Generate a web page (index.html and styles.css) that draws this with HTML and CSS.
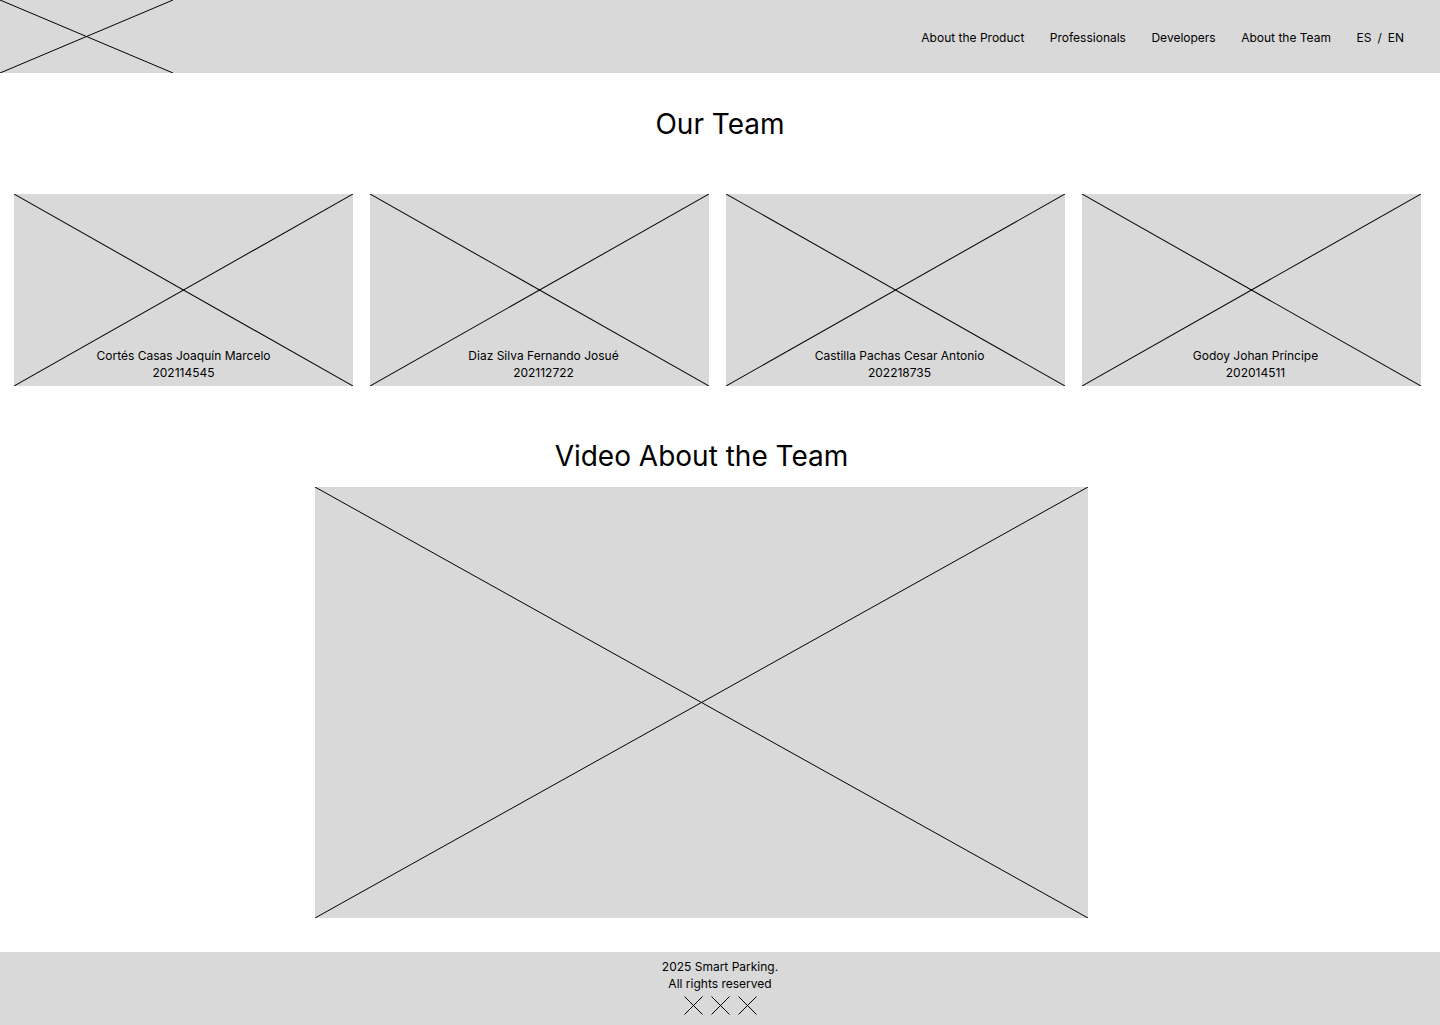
FILE: index.html
```html
<!DOCTYPE html>
<html lang="en">
<head>
<meta charset="utf-8">
<title>Smart Parking - About the Team</title>
<link rel="stylesheet" href="styles.css">
</head>
<body>
<header class="header">
  <a class="logo" href="#">
    <svg class="ph" viewBox="0 0 100 100" preserveAspectRatio="none"><line x1="0" y1="0" x2="100" y2="100"/><line x1="100" y1="0" x2="0" y2="100"/></svg>
  </a>
  <nav class="nav">
    <a href="#">About the Product</a>
    <a href="#">Professionals</a>
    <a href="#">Developers</a>
    <a href="#">About the Team</a>
    <span class="lang"><a href="#">ES</a><span>/</span><a href="#">EN</a></span>
  </nav>
</header>

<main>
  <h1 class="title">Our Team</h1>
  <section class="cards">
    <div class="card">
      <svg class="ph" viewBox="0 0 100 100" preserveAspectRatio="none"><line x1="0" y1="0" x2="100" y2="100"/><line x1="100" y1="0" x2="0" y2="100"/></svg>
      <div class="card-text"><span>Cortés Casas Joaquín Marcelo</span><span>202114545</span></div>
    </div>
    <div class="card card--shift">
      <svg class="ph" viewBox="0 0 100 100" preserveAspectRatio="none"><line x1="0" y1="0" x2="100" y2="100"/><line x1="100" y1="0" x2="0" y2="100"/></svg>
      <div class="card-text"><span>Diaz Silva Fernando Josué</span><span>202112722</span></div>
    </div>
    <div class="card card--shift">
      <svg class="ph" viewBox="0 0 100 100" preserveAspectRatio="none"><line x1="0" y1="0" x2="100" y2="100"/><line x1="100" y1="0" x2="0" y2="100"/></svg>
      <div class="card-text"><span>Castilla Pachas Cesar Antonio</span><span>202218735</span></div>
    </div>
    <div class="card card--shift">
      <svg class="ph" viewBox="0 0 100 100" preserveAspectRatio="none"><line x1="0" y1="0" x2="100" y2="100"/><line x1="100" y1="0" x2="0" y2="100"/></svg>
      <div class="card-text"><span>Godoy Johan Príncipe</span><span>202014511</span></div>
    </div>
  </section>

  <section class="video-section">
    <h2 class="title">Video About the Team</h2>
    <div class="video">
      <svg class="ph" viewBox="0 0 100 100" preserveAspectRatio="none"><line x1="0" y1="0" x2="100" y2="100"/><line x1="100" y1="0" x2="0" y2="100"/></svg>
    </div>
  </section>
</main>

<footer class="footer">
  <p class="copy">2025 Smart Parking.<br>All rights reserved</p>
  <div class="socials">
    <a href="#" class="social"><svg viewBox="0 0 19 19"><line x1="0.5" y1="0.5" x2="18.5" y2="18.5"/><line x1="18.5" y1="0.5" x2="0.5" y2="18.5"/></svg></a>
    <a href="#" class="social"><svg viewBox="0 0 19 19"><line x1="0.5" y1="0.5" x2="18.5" y2="18.5"/><line x1="18.5" y1="0.5" x2="0.5" y2="18.5"/></svg></a>
    <a href="#" class="social"><svg viewBox="0 0 19 19"><line x1="0.5" y1="0.5" x2="18.5" y2="18.5"/><line x1="18.5" y1="0.5" x2="0.5" y2="18.5"/></svg></a>
  </div>
</footer>
</body>
</html>
```
FILE: styles.css
```css
* { box-sizing: border-box; }

body {
  margin: 0;
  font-family: Inter, "Noto Sans", sans-serif;
  color: #000;
  background: #fff;
}

a { color: inherit; text-decoration: none; }

.ph {
  position: absolute;
  inset: 0;
  width: 100%;
  height: 100%;
  display: block;
}
.ph line {
  stroke: #000;
  stroke-width: 1;
  vector-effect: non-scaling-stroke;
}

.header {
  height: 73px;
  background: #d9d9d9;
  display: flex;
  justify-content: space-between;
  align-items: center;
}

.logo {
  position: relative;
  width: 173px;
  height: 73px;
  display: block;
}

.nav {
  display: flex;
  align-items: center;
  gap: 25.5px;
  padding: 2px 36px 0 0;
  font-size: 12px;
  line-height: 17px;
}

.lang {
  display: flex;
  gap: 6px;
}

.title {
  margin: 34px 0 0;
  font-size: 28px;
  font-weight: 400;
  line-height: 34px;
  text-align: center;
}

.cards {
  margin-top: 53px;
  padding: 0 19px 0 14px;
  display: flex;
  justify-content: space-between;
}

.card {
  position: relative;
  width: 339px;
  height: 192px;
  background: #d9d9d9;
  display: flex;
  flex-direction: column;
  justify-content: flex-end;
}

.card-text {
  position: relative;
  display: flex;
  flex-direction: column;
  align-items: center;
  padding-bottom: 5px;
  font-size: 12px;
  line-height: 17px;
}

.card--shift .card-text { padding-left: 8px; }

.video-section {
  width: 773px;
  margin: 53px 0 0 315px;
}
.video-section .title { margin: 0; }

.video {
  position: relative;
  margin-top: 14px;
  height: 431px;
  background: #d9d9d9;
}

.footer {
  margin-top: 34px;
  height: 73px;
  background: #d9d9d9;
  display: flex;
  flex-direction: column;
  align-items: center;
  padding-top: 6px;
}

.copy {
  margin: 0;
  font-size: 12px;
  line-height: 17px;
  text-align: center;
}

.socials {
  display: flex;
  gap: 8px;
  margin-top: 4px;
}

.social svg {
  display: block;
  width: 19px;
  height: 19px;
}
.social line { stroke: #000; stroke-width: 1; }
```
